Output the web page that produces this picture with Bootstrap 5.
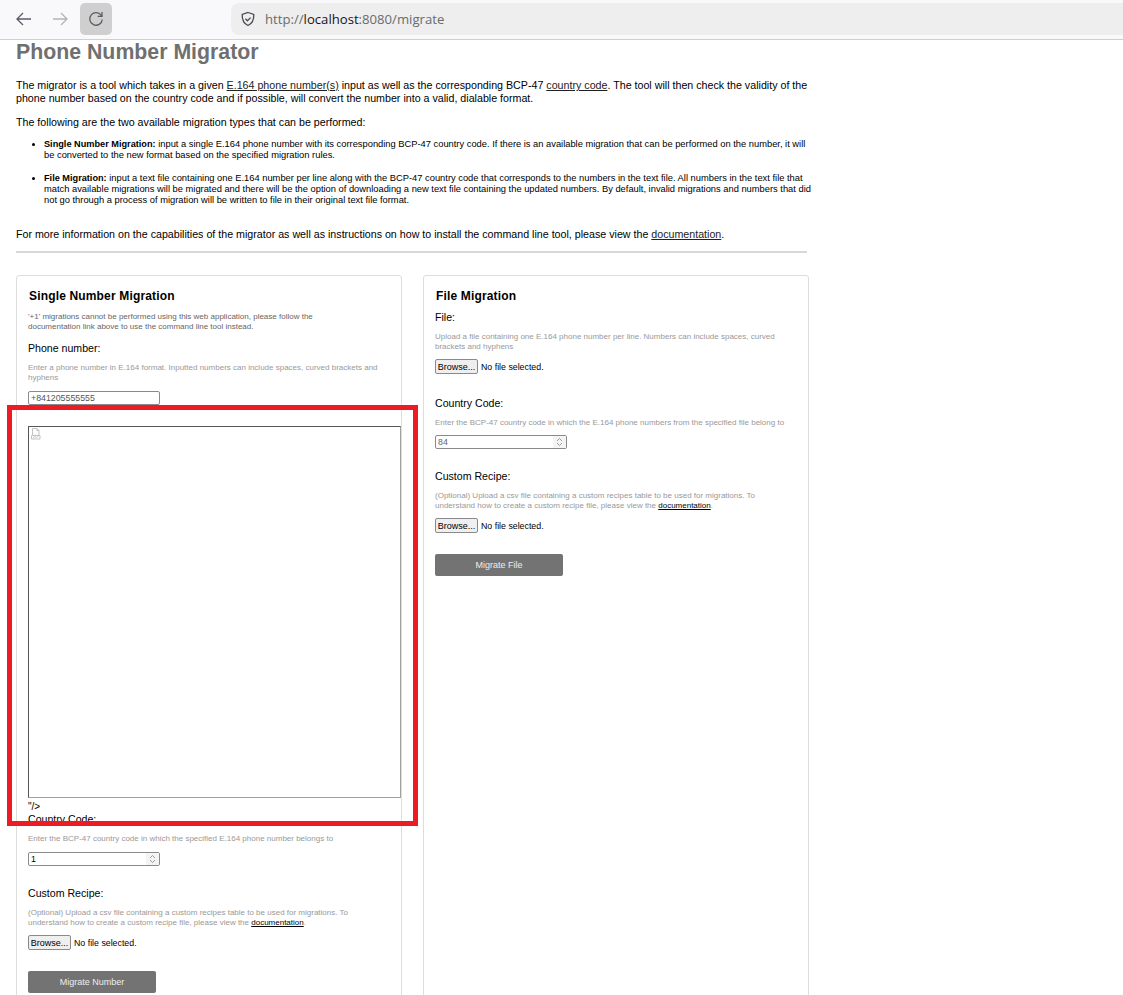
<!DOCTYPE html>
<html lang="en">
<head>
<meta charset="utf-8">
<title>Phone Number Migrator</title>
<link href="https://cdn.jsdelivr.net/npm/bootstrap@5.3.0/dist/css/bootstrap.min.css" rel="stylesheet">
<style>
html,body{height:995px;overflow:hidden;background:#fff;}
body{font-family:"Liberation Sans",Arial,sans-serif;font-size:10px;line-height:13px;color:#000;position:relative;}
.chrome-bar{height:40px;background:#f9f9fb;border-bottom:1px solid #cfcfd8;align-items:center;padding-left:8px;padding-bottom:1px;}
.tool-btn{width:32px;height:32px;border-radius:5px;display:flex;align-items:center;justify-content:center;margin-right:4px;}
.tool-btn.on{background:#cfcfcf;}
.url-box{position:relative;flex:1;height:32px;margin-left:115px;background:#eeeeee;border-radius:8px 0 0 8px;display:flex;align-items:center;padding-left:8px;font-size:13.15px;color:#6b6b6b;font-family:"Open Sans","Liberation Sans",sans-serif;}
.url-box b{font-weight:400;color:#15141a;}
.page-wrap{width:793px;margin-left:16px;}
.page-title{font-size:21.3px;line-height:24px;font-weight:700;color:#707070;margin:0 0 15px;}
.intro{margin:0 0 11px;font-size:10.68px;line-height:13px;width:795px;}
.intro a{color:#222;}
.hint a{color:#000;}
.intro-tight{margin-bottom:10px;}
.points{margin:0 0 22px;padding-left:28px;width:795px;}
.points li{font-size:9.33px;line-height:11px;margin-bottom:12px;}
.points strong{font-size:9.19px;}
.rule-line{height:2px;background:#d8d8d8;margin:10px 0 22px;width:791px;}
.twin{display:grid;grid-template-columns:386px 386px;gap:21px;}
.panel{border:1px solid #dddddd;border-radius:3px;height:760px;padding:0 13px 0 11px;}
.panel-title{font-size:12px;line-height:15px;font-weight:700;margin:13px 0 0 1px;letter-spacing:.16px;}
.note{font-size:8px;line-height:10px;color:#666;margin:8px 0 0;}
.fld-label{font-size:10.6px;line-height:13px;margin:0;}
.hint{font-size:8px;line-height:10px;color:#999;margin:8px 0 0;}
.txt-input{display:block;width:132px;height:14px;border:1px solid #8a8a8a;border-radius:2px;font-size:8.8px;line-height:12px;color:#555;padding:0 2px;background:#fff;}
.num-input{width:132px;height:14px;border:1px solid #8a8a8a;border-radius:2px;font-size:8.8px;line-height:12px;padding:0 2px;justify-content:space-between;align-items:center;}
.num-muted{color:#666;}
.spin{width:13px;height:12px;margin-right:-2px;background:#f4f4f4;display:flex;align-items:center;justify-content:center;}
.file-row{display:flex;align-items:center;font-size:8.8px;line-height:14px;gap:3px;height:15px;}
.browse{font-size:9px;line-height:12px;height:15px;padding:0;border:1px solid #8a8a8a;border-radius:2px;background:#efefef;color:#000;font-family:inherit;width:43px;}
.go-btn{display:block;width:128px;height:22px;border:0;border-radius:2px;background:#737373;color:#eee;font-size:9px;line-height:22px;padding:0;text-align:center;font-family:inherit;}
.frame-box{width:373px;height:372px;border:1px solid #767676;border-top-color:#555;border-left-color:#555;border-right-color:#a0a0a0;border-bottom-color:#a0a0a0;padding:1px 2px;margin:21px 0 0;}
.stray{font-size:10px;line-height:12px;height:12px;margin-top:3px;}
.red-mark{position:absolute;left:7px;top:405px;width:411px;height:421px;border:5px solid #ed1c24;pointer-events:none;}
.gap-left{margin-top:10px;}.gap-right{margin-top:7px;}.gap-input{margin-top:8px;}.gap-input-sm{margin-top:7px;}.gap-row{margin-top:7px;}.gap-section{margin-top:21px;}.gap-section-lg{margin-top:23px;}.gap-go{margin-top:21px;}
</style>
</head>
<body>
<div class="chrome-bar d-flex">
  <div class="tool-btn"><svg width="18" height="18" viewBox="0 0 18 18" fill="none" stroke="#5b5b66" stroke-width="1.3"><path d="M16 9H2M8 3L2 9l6 6"/></svg></div>
  <div class="tool-btn"><svg width="18" height="18" viewBox="0 0 18 18" fill="none" stroke="#b4b4b8" stroke-width="1.3"><path d="M2 9h14M10 3l6 6-6 6"/></svg></div>
  <div class="tool-btn on"><svg width="18" height="18" viewBox="0 0 18 18" fill="none" stroke="#5b5b66" stroke-width="1.3"><path d="M14.6 6A6.3 6.3 0 1 0 15.3 9.500"/><path d="M15 2v4.300h-4.300"/></svg></div>
  <div class="url-box"><svg class="me-2" width="18" height="18" viewBox="0 0 18 18" fill="none" stroke="#4a4a52" stroke-width="1.3"><path d="M9 2.500l5.800 2c.2 5-1.300 9-5.800 11-4.500-2-6-6-5.800-11z"/><path d="M6.400 8.800l2 2 3.200-3.200"/></svg><span>http://<b>localhost</b>:8080/migrate</span></div>
</div>
<main class="page-wrap">
  <h1 class="page-title">Phone Number Migrator</h1>
  <p class="intro">The migrator is a tool which takes in a given <a href="#">E.164 phone number(s)</a> input as well as the corresponding BCP-47 <a href="#">country code</a>. The tool will then check the validity of the phone number based on the country code and if possible, will convert the number into a valid, dialable format.</p>
  <p class="intro intro-tight">The following are the two available migration types that can be performed:</p>
  <ul class="points">
    <li><strong>Single Number Migration:</strong> input a single E.164 phone number with its corresponding BCP-47 country code. If there is an available migration that can be performed on the number, it will be converted to the new format based on the specified migration rules.</li>
    <li><strong>File Migration:</strong> input a text file containing one E.164 number per line along with the BCP-47 country code that corresponds to the numbers in the text file. All numbers in the text file that match available migrations will be migrated and there will be the option of downloading a new text file containing the updated numbers. By default, invalid migrations and numbers that did not go through a process of migration will be written to file in their original text file format.</li>
  </ul>
  <p class="intro mb-0">For more information on the capabilities of the migrator as well as instructions on how to install the command line tool, please view the <a href="#">documentation</a>.</p>
  <div class="rule-line"></div>
  <div class="twin">
    <section class="panel">
      <h2 class="panel-title">Single Number Migration</h2>
      <p class="note">'+1' migrations cannot be performed using this web application, please follow the<br>documentation link above to use the command line tool instead.</p>
      <p class="fld-label gap-left">Phone number:</p>
      <p class="hint">Enter a phone number in E.164 format. Inputted numbers can include spaces, curved brackets and hyphens</p>
      <div class="txt-input gap-input">+841205555555</div>
      <div class="frame-box"><svg class="d-block" width="10" height="12" viewBox="0 0 10 12" fill="none" stroke="#b5b5b5" stroke-width=".8"><path d="M1.500 7V.5h4.500l2 2v4.500M6 .5v2h2"/><path d="M.5 7.500h8.500v3.500h-8.500zM2 10l2-1.500 1.500 1 2-1.500"/></svg></div>
      <div class="stray">"/&gt;</div>
      <p class="fld-label">Country Code:</p>
      <p class="hint">Enter the BCP-47 country code in which the specified E.164 phone number belongs to</p>
      <div class="num-input d-flex gap-input"><span>1</span><span class="spin"><svg width="7" height="10" viewBox="0 0 7 10" fill="none" stroke="#888" stroke-width=".8"><path d="M1 4l2.500-2.500L6 4M1 6l2.500 2.500L6 6"/></svg></span></div>
      <p class="fld-label gap-section">Custom Recipe:</p>
      <p class="hint">(Optional) Upload a csv file containing a custom recipes table to be used for migrations. To understand how to create a custom recipe file, please view the <a href="#">documentation</a>.</p>
      <div class="file-row gap-row"><button type="button" class="browse">Browse...</button><span>No file selected.</span></div>
      <button type="button" class="go-btn gap-go">Migrate Number</button>
    </section>
    <section class="panel">
      <h2 class="panel-title">File Migration</h2>
      <p class="fld-label gap-right">File:</p>
      <p class="hint">Upload a file containing one E.164 phone number per line. Numbers can include spaces, curved brackets and hyphens</p>
      <div class="file-row gap-row"><button type="button" class="browse">Browse...</button><span>No file selected.</span></div>
      <p class="fld-label gap-section-lg">Country Code:</p>
      <p class="hint">Enter the BCP-47 country code in which the E.164 phone numbers from the specified file belong to</p>
      <div class="num-input d-flex gap-input-sm"><span class="num-muted">84</span><span class="spin"><svg width="7" height="10" viewBox="0 0 7 10" fill="none" stroke="#888" stroke-width=".8"><path d="M1 4l2.500-2.500L6 4M1 6l2.500 2.500L6 6"/></svg></span></div>
      <p class="fld-label gap-section">Custom Recipe:</p>
      <p class="hint">(Optional) Upload a csv file containing a custom recipes table to be used for migrations. To understand how to create a custom recipe file, please view the <a href="#">documentation</a>.</p>
      <div class="file-row gap-row"><button type="button" class="browse">Browse...</button><span>No file selected.</span></div>
      <button type="button" class="go-btn gap-go">Migrate File</button>
    </section>
  </div>
</main>
<div class="red-mark"></div>
<script src="https://cdn.jsdelivr.net/npm/bootstrap@5.3.0/dist/js/bootstrap.bundle.min.js"></script>
</body>
</html>
